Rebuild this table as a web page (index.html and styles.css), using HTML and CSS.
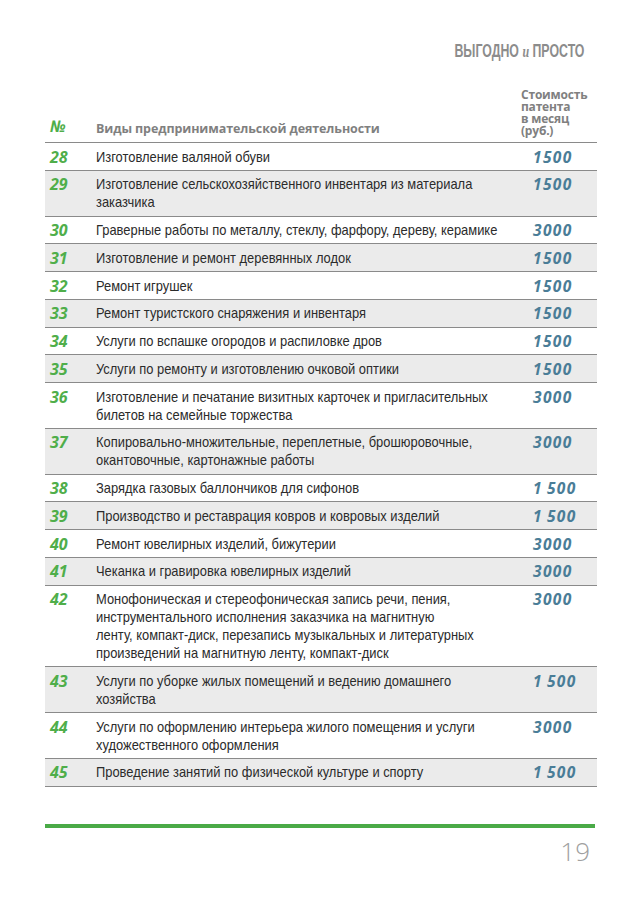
FILE: index.html
```html
<!DOCTYPE html>
<html lang="ru">
<head>
<meta charset="utf-8">
<link rel="stylesheet" href="styles.css">
</head>
<body>
<div class="page">
  <header class="running"><span class="running-in">ВЫГОДНО <span class="and">и</span> ПРОСТО</span></header>
  <table class="tbl">
    <colgroup>
      <col class="w-num">
      <col class="w-desc">
      <col class="w-price">
    </colgroup>
    <thead>
      <tr>
        <th class="c-num"><span class="numsign">№</span></th>
        <th class="c-desc">Виды предпринимательской деятельности</th>
        <th class="c-price">Стоимость<br>патента<br>в месяц<br>(руб.)</th>
      </tr>
    </thead>
    <tbody>
      <tr><td class="c-num">28</td><td class="c-desc"><div class="nar">Изготовление валяной обуви</div></td><td class="c-price">1500</td></tr>
      <tr class="alt"><td class="c-num">29</td><td class="c-desc"><div class="nar">Изготовление сельскохозяйственного инвентаря из материала заказчика</div></td><td class="c-price">1500</td></tr>
      <tr><td class="c-num">30</td><td class="c-desc"><div class="nar">Граверные работы по металлу, стеклу, фарфору, дереву, керамике</div></td><td class="c-price">3000</td></tr>
      <tr class="alt"><td class="c-num">31</td><td class="c-desc"><div class="nar">Изготовление и ремонт деревянных лодок</div></td><td class="c-price">1500</td></tr>
      <tr><td class="c-num">32</td><td class="c-desc"><div class="nar">Ремонт игрушек</div></td><td class="c-price">1500</td></tr>
      <tr class="alt"><td class="c-num">33</td><td class="c-desc"><div class="nar">Ремонт туристского снаряжения и инвентаря</div></td><td class="c-price">1500</td></tr>
      <tr><td class="c-num">34</td><td class="c-desc"><div class="nar">Услуги по вспашке огородов и распиловке дров</div></td><td class="c-price">1500</td></tr>
      <tr class="alt"><td class="c-num">35</td><td class="c-desc"><div class="nar">Услуги по ремонту и изготовлению очковой оптики</div></td><td class="c-price">1500</td></tr>
      <tr><td class="c-num">36</td><td class="c-desc"><div class="nar">Изготовление и печатание визитных карточек и пригласительных билетов на семейные торжества</div></td><td class="c-price">3000</td></tr>
      <tr class="alt"><td class="c-num">37</td><td class="c-desc"><div class="nar">Копировально-множительные, переплетные, брошюровочные, окантовочные, картонажные работы</div></td><td class="c-price">3000</td></tr>
      <tr><td class="c-num">38</td><td class="c-desc"><div class="nar">Зарядка газовых баллончиков для сифонов</div></td><td class="c-price">1&thinsp;500</td></tr>
      <tr class="alt"><td class="c-num">39</td><td class="c-desc"><div class="nar">Производство и реставрация ковров и ковровых изделий</div></td><td class="c-price">1&thinsp;500</td></tr>
      <tr><td class="c-num">40</td><td class="c-desc"><div class="nar">Ремонт ювелирных изделий, бижутерии</div></td><td class="c-price">3000</td></tr>
      <tr class="alt"><td class="c-num">41</td><td class="c-desc"><div class="nar">Чеканка и гравировка ювелирных изделий</div></td><td class="c-price">3000</td></tr>
      <tr><td class="c-num">42</td><td class="c-desc"><div class="nar">Монофоническая и стереофоническая запись речи, пения, инструментального исполнения заказчика на магнитную<br>ленту, компакт-диск, перезапись музыкальных и литературных произведений на магнитную ленту, компакт-диск</div></td><td class="c-price">3000</td></tr>
      <tr class="alt"><td class="c-num">43</td><td class="c-desc"><div class="nar">Услуги по уборке жилых помещений и ведению домашнего хозяйства</div></td><td class="c-price">1&thinsp;500</td></tr>
      <tr><td class="c-num">44</td><td class="c-desc"><div class="nar">Услуги по оформлению интерьера жилого помещения и услуги художественного оформления</div></td><td class="c-price">3000</td></tr>
      <tr class="alt"><td class="c-num">45</td><td class="c-desc"><div class="nar">Проведение занятий по физической культуре и спорту</div></td><td class="c-price">1&thinsp;500</td></tr>
    </tbody>
  </table>
  <footer class="foot">
    <div class="rule"></div>
    <div class="pageno">19</div>
  </footer>
</div>
</body>
</html>
```
FILE: styles.css
```css
html, body {
  margin: 0;
  padding: 0;
  background: #ffffff;
}
.page {
  width: 638px;
  height: 906px;
  padding: 42px 41px 0 45px;
  box-sizing: border-box;
  display: flex;
  flex-direction: column;
}
.running {
  align-self: flex-end;
  margin-right: 13px;
  height: 19px;
}
.running-in {
  display: inline-block;
  transform: scaleX(0.705);
  transform-origin: right center;
  font-family: "Liberation Sans", sans-serif;
  font-weight: bold;
  font-size: 17.5px;
  line-height: 19px;
  color: #8c8c8c;
  white-space: nowrap;
}
.running .and {
  font-family: "Liberation Serif", serif;
  font-style: italic;
  font-weight: bold;
  font-size: 17px;
}
.tbl {
  margin-top: 28px;
  width: 552px;
  border-collapse: collapse;
  table-layout: fixed;
}
.w-num { width: 51px; }
.w-desc { width: 425px; }
.w-price { width: 76px; }
.tbl th {
  font-family: "Open Sans", sans-serif;
  font-weight: bold;
  color: #808080;
  text-align: left;
  vertical-align: bottom;
  padding: 0 0 5px 0;
  border-bottom: 1px solid #8a8a8a;
}
.tbl th.c-num { padding-left: 5px; }
.tbl th.c-desc {
  font-size: 12.5px;
  letter-spacing: -0.1px;
  line-height: 16px;
}
.tbl th.c-price {
  font-size: 12px;
  line-height: 12px;
  letter-spacing: -0.2px;
}
.numsign {
  font-family: "Open Sans", sans-serif;
  font-style: italic;
  font-weight: bold;
  color: #4fae4a;
  font-size: 16px;
  line-height: 16px;
}
.tbl td {
  vertical-align: top;
  padding: 4.5px 0 4.25px 0;
  border-bottom: 1px solid #8a8a8a;
  line-height: 18px;
}
.tbl tr.alt td { background: #ebebeb; }
.tbl td.c-num {
  padding-left: 5px;
  font-family: "Open Sans", sans-serif;
  font-weight: bold;
  font-style: italic;
  font-size: 16px;
  color: #4fae4a;
}
.tbl td.c-desc {
  padding-right: 0;
}
.nar {
  width: 471px;
  transform: scaleX(0.86);
  transform-origin: left top;
  font-family: "Liberation Sans", sans-serif;
  font-size: 15px;
  line-height: 18px;
  color: #2b2b2b;
}
.tbl td.c-price {
  padding-left: 12px;
  font-family: "Open Sans", sans-serif;
  font-weight: bold;
  font-style: italic;
  font-size: 15.5px;
  color: #4a7d97;
  letter-spacing: 1.4px;
  white-space: nowrap;
}
.foot {
  margin-top: auto;
  margin-bottom: 41px;
  display: flex;
  flex-direction: column;
  align-items: flex-end;
}
.rule {
  align-self: stretch;
  height: 4px;
  background: #4aaa47;
  margin-right: 2px;
}
.pageno {
  margin-top: 9px;
  margin-right: 7px;
  font-family: "Open Sans", sans-serif;
  font-weight: 300;
  font-size: 26px;
  line-height: 28px;
  color: #a0a0a0;
}
```
